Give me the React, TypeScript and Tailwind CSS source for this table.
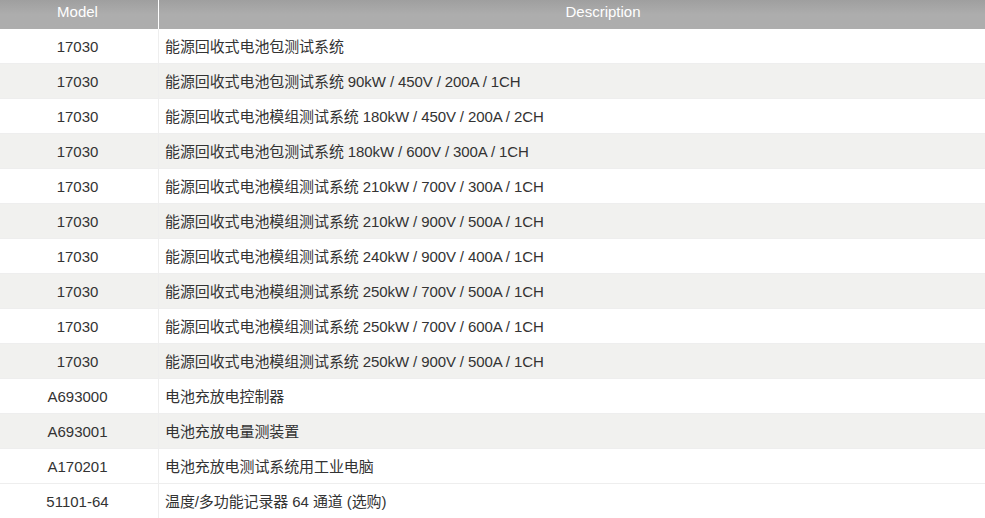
const rows: [string, string][] = [
  ["17030", "能源回收式电池包测试系统"],
  ["17030", "能源回收式电池包测试系统 90kW / 450V / 200A / 1CH"],
  ["17030", "能源回收式电池模组测试系统 180kW / 450V / 200A / 2CH"],
  ["17030", "能源回收式电池包测试系统 180kW / 600V / 300A / 1CH"],
  ["17030", "能源回收式电池模组测试系统 210kW / 700V / 300A / 1CH"],
  ["17030", "能源回收式电池模组测试系统 210kW / 900V / 500A / 1CH"],
  ["17030", "能源回收式电池模组测试系统 240kW / 900V / 400A / 1CH"],
  ["17030", "能源回收式电池模组测试系统 250kW / 700V / 500A / 1CH"],
  ["17030", "能源回收式电池模组测试系统 250kW / 700V / 600A / 1CH"],
  ["17030", "能源回收式电池模组测试系统 250kW / 900V / 500A / 1CH"],
  ["A693000", "电池充放电控制器"],
  ["A693001", "电池充放电量测装置"],
  ["A170201", "电池充放电测试系统用工业电脑"],
  ["51101-64", "温度/多功能记录器 64 通道 (选购)"],
];

export default function App() {
  return (
    <div className="w-full overflow-hidden bg-white font-['Liberation_Sans','Noto_Sans_CJK_SC',sans-serif] text-[15px] text-[#333]">
      <div className="w-[1047px]">
        <div className="flex h-[29px] bg-gradient-to-b from-[#9f9f9f] via-[#adadad] to-[#adadad] text-white leading-[24px]">
          <div className="w-[158px] shrink-0 pr-[3px] text-center">Model</div>
          <div className="flex-1 border-l border-white text-center">Description</div>
        </div>
        {rows.map(([model, desc], i) => (
          <div
            key={i}
            className={
              "flex h-[35px] items-center border-b border-[#eeeeee] " +
              (i % 2 === 1 && i < 13 ? "bg-[#f1f1ef]" : "bg-white")
            }
          >
            <div className="flex h-full w-[158px] shrink-0 items-center justify-center pr-[3px] pt-[2px]">
              {model}
            </div>
            <div className="flex h-full flex-1 items-center border-l border-[#eeeeee] pl-[6px] pt-[2px] tracking-[-0.1px]">
              {desc}
            </div>
          </div>
        ))}
      </div>
    </div>
  );
}
